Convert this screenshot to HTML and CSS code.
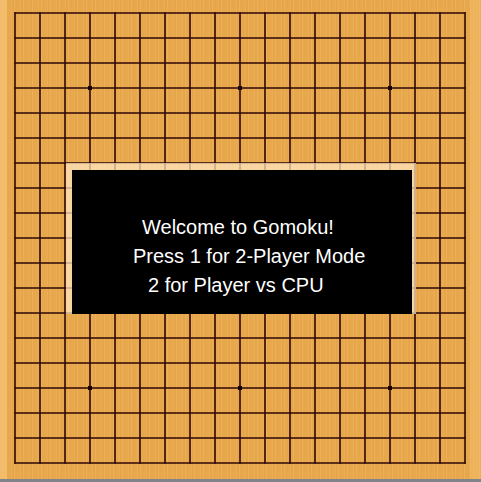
FILE: index.html
```html
<!DOCTYPE html>
<html>
<head>
<meta charset="utf-8">
<link rel="stylesheet" href="styles.css">
</head>
<body>
<div class="page">
  <div class="board">
    <svg class="grid" width="481" height="479" viewBox="0 0 481 479" xmlns="http://www.w3.org/2000/svg">
      <g stroke="#2e0707" stroke-width="1.6" id="lines"></g>
      <g fill="#1a0505">
        <rect x="88" y="86" width="4" height="4"/>
        <rect x="238" y="86" width="4" height="4"/>
        <rect x="388" y="86" width="4" height="4"/>
        <rect x="88" y="386" width="4" height="4"/>
        <rect x="238" y="386" width="4" height="4"/>
        <rect x="388" y="386" width="4" height="4"/>
      </g>
    </svg>
    <div class="overlay">
      <div class="panel">
        <div class="line l1">Welcome to Gomoku!</div>
        <div class="line l2">Press 1 for 2-Player Mode</div>
        <div class="line l3">2 for Player vs CPU</div>
      </div>
    </div>
  </div>
  <div class="band"></div>
</div>
<script src="script.js"></script>
</body>
</html>
```
FILE: script.js
```js
var g = document.getElementById('lines');
var ns = 'http://www.w3.org/2000/svg';
for (var i = 0; i < 19; i++) {
  var x = 15 + i * 25;
  var y = 13 + i * 25;
  var v = document.createElementNS(ns, 'line');
  v.setAttribute('x1', x); v.setAttribute('x2', x);
  v.setAttribute('y1', 12.2); v.setAttribute('y2', 463.8);
  g.appendChild(v);
  var h = document.createElementNS(ns, 'line');
  h.setAttribute('y1', y); h.setAttribute('y2', y);
  h.setAttribute('x1', 14.2); h.setAttribute('x2', 465.8);
  g.appendChild(h);
}
```
FILE: styles.css
```css
html, body {
  margin: 0;
  padding: 0;
  background: #ffffff;
}
.page {
  width: 481px;
  height: 482px;
  display: flex;
  flex-direction: column;
}
.board {
  position: relative;
  width: 481px;
  height: 479px;
  background:
    linear-gradient(90deg, rgba(250,205,130,0.55) 0, rgba(250,205,130,0.55) 7px, transparent 7px, transparent 470px, rgba(250,200,120,0.35) 470px),
    repeating-linear-gradient(90deg, #e8a94e 0, #e8a94e 2px, #eaad55 2px, #eaad55 3px, #e5a548 3px, #e5a548 5px, #ecb05a 5px, #ecb05a 6px, #e7a84c 6px, #e7a84c 9px);
}
.grid {
  display: block;
}
.band {
  height: 3px;
  background: #80828c;
}
.overlay {
  position: absolute;
  left: 66px;
  top: 163px;
  width: 350px;
  height: 151px;
  padding: 7px 4px 0 6px;
  box-sizing: border-box;
  background: rgba(255, 232, 195, 0.72);
}
.panel {
  width: 340px;
  height: 144px;
  background: #000000;
  color: #ffffff;
  font-family: "Liberation Sans", Arial, sans-serif;
  font-size: 20px;
  display: flex;
  flex-direction: column;
  padding-top: 43px;
  box-sizing: border-box;
}
.line {
  line-height: 29px;
  white-space: pre;
}
.l1 { padding-left: 70px; }
.l2 { padding-left: 61px; }
.l3 { padding-left: 76px; }
```
